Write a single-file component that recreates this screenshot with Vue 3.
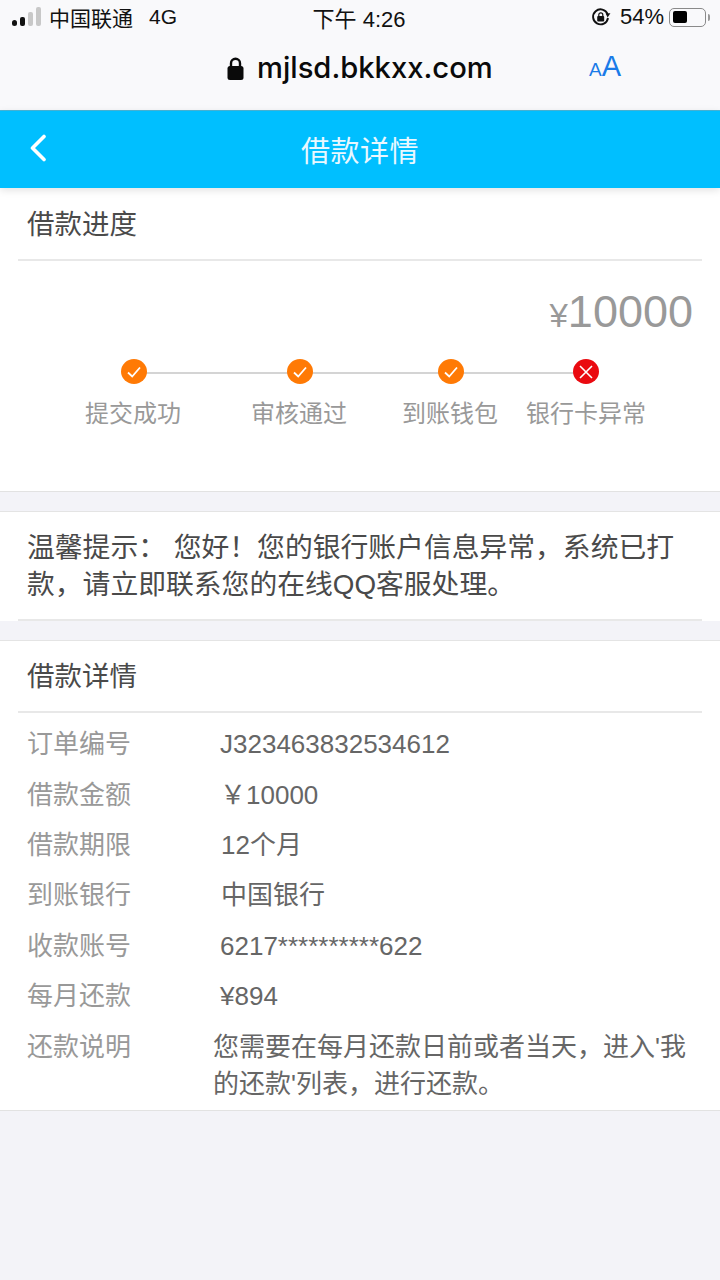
<script setup>
const steps = [
  { label: '提交成功', fail: false },
  { label: '审核通过', fail: false },
  { label: '到账钱包', fail: false },
  { label: '银行卡异常', fail: true }
]
const rows = [
  { k: '订单编号', v: 'J323463832534612', o: 'p0' },
  { k: '借款金额', v: '￥10000', o: 'p0' },
  { k: '借款期限', v: '12个月', o: 'p1' },
  { k: '到账银行', v: '中国银行', o: 'p1' },
  { k: '收款账号', v: '6217**********622', o: 'p0' },
  { k: '每月还款', v: '¥894', o: 'p0' }
]
</script>

<template>
  <div class="page">
    <div class="browser">
      <div class="status">
        <div class="st-left">
          <svg class="signal" width="30" height="20" viewBox="0 0 30 20">
            <rect x="0" y="13" width="5" height="6" rx="2.5" fill="#111" />
            <rect x="8" y="10" width="5" height="9" rx="2" fill="#111" />
            <rect x="16" y="5" width="5" height="14" rx="2" fill="#c8c8c8" />
            <rect x="24" y="0" width="5" height="19" rx="2" fill="#c8c8c8" />
          </svg>
          <span class="carrier">中国联通</span>
          <span class="net">4G</span>
        </div>
        <div class="st-time">下午 4:26</div>
        <div class="st-right">
          <svg width="20" height="20" viewBox="0 0 20 20" fill="none">
            <path d="M16.6 7.2A7.5 7.5 0 1 0 17 11" stroke="#111" stroke-width="1.9" />
            <path d="M19.4 6.2L14.6 6.6L16.6 10.4Z" fill="#111" />
            <rect x="6.2" y="9" width="7" height="5.4" rx="1" fill="#111" />
            <path d="M7.8 9.5V7.8a2 2 0 0 1 4 0v1.7" stroke="#111" stroke-width="1.2" />
          </svg>
          <span class="pct">54%</span>
          <div class="battery"><div class="level"></div></div>
          <div class="nub"></div>
        </div>
      </div>
      <div class="address">
        <svg class="lock" width="17" height="23" viewBox="0 0 17 23">
          <rect x="0.5" y="9" width="16" height="14" rx="2.5" fill="#0a0a0a" />
          <path d="M4 10V6.2a4.5 4.5 0 0 1 9 0V10" fill="none" stroke="#0a0a0a" stroke-width="2.4" />
        </svg>
        <span class="host">mjlsd.bkkxx.com</span>
        <span class="aa"><span class="a-s">A</span><span class="a-l">A</span></span>
      </div>
    </div>

    <header class="nav">
      <svg class="back" width="18" height="28" viewBox="0 0 18 28" fill="none">
        <path d="M15 2.5L3.5 14L15 25.5" stroke="#fff" stroke-width="3.6" stroke-linecap="round" stroke-linejoin="round" />
      </svg>
      <h1>借款详情</h1>
    </header>

    <section class="card progress">
      <div class="head">借款进度</div>
      <div class="amount"><span class="yen">¥</span>10000</div>
      <div class="steps">
        <div class="line"></div>
        <div v-for="s in steps" :key="s.label" class="step">
          <span class="dot" :class="{ fail: s.fail }">
            <svg v-if="!s.fail" width="16" height="14" viewBox="0 0 16 14" fill="none">
              <path d="M2 7.5L6.2 11.5L14 2.5" stroke="#fff" stroke-width="1.8" />
            </svg>
            <svg v-else width="16" height="16" viewBox="0 0 16 16" fill="none">
              <path d="M2 2L14 14M14 2L2 14" stroke="#fff" stroke-width="1.6" />
            </svg>
          </span>
          <span class="label">{{ s.label }}</span>
        </div>
      </div>
    </section>

    <section class="card tip">
      <p>温馨提示： 您好！您的银行账户信息异常，系统已打款，请立即联系您的在线QQ客服处理。</p>
    </section>

    <section class="card detail">
      <div class="head">借款详情</div>
      <div class="rows">
        <div v-for="r in rows" :key="r.k" class="row">
          <span class="k">{{ r.k }}</span>
          <span class="v" :class="r.o">{{ r.v }}</span>
        </div>
        <div class="row note">
          <span class="k">还款说明</span>
          <span class="v">您需要在每月还款日前或者当天，进入'我的还款'列表，进行还款。</span>
        </div>
      </div>
    </section>
  </div>
</template>

<style>
html, body { margin: 0; background: #f2f2f7; }
</style>

<style scoped>
.page {
  width: 720px;
  height: 1280px;
  overflow: hidden;
  background: #f3f3f8;
  font-family: "Liberation Sans", "Noto Sans CJK SC", sans-serif;
  color: #444;
}
.browser { height: 110px; background: #f9f9fb; border-bottom: 1px solid #4ab6d8; }
.status {
  height: 36px;
  display: grid;
  grid-template-columns: 1fr auto 1fr;
  column-gap: 0;
  align-items: center;
  padding: 0 10px 2px 12px;
  box-sizing: border-box;
  font-size: 21px;
  color: #111;
}
.st-left { display: flex; align-items: center; }
.signal { margin-right: 7px; }
.carrier { font-size: 21px; }
.net { margin-left: 16px; }
.st-time { font-size: 22px; margin-left: -4px; }
.st-right { display: flex; align-items: center; justify-content: flex-end; }
.pct { margin: 0 5px 0 9px; font-size: 22px; }
.battery {
  width: 29px;
  height: 12px;
  border: 1.5px solid #8a8a8a;
  border-radius: 5px;
  padding: 2.5px 3px;
  box-sizing: content-box;
}
.level { width: 14px; height: 100%; background: #000; border-radius: 2px; }
.nub { width: 2px; height: 7px; margin-left: 2px; background: #999; border-radius: 0 2px 2px 0; }
.address { position: relative; height: 74px; display: flex; align-items: center; padding-left: 227px; box-sizing: border-box; padding-bottom: 11px; }
.lock { margin-right: 13px; margin-top: 1px; }
.host { font-family: Inter, "Liberation Sans", sans-serif; font-size: 29.2px; font-weight: 500; color: #0a0a0a; white-space: nowrap; }
.aa { position: absolute; left: 589px; top: 16px; color: #1a7be8; line-height: 1; display: flex; align-items: baseline; }
.a-s { font-size: 19px; margin-right: 0; }
.a-l { font-size: 29px; }

.nav {
  position: relative;
  z-index: 1;
  height: 77px;
  padding-bottom: 2px;
  box-sizing: border-box;
  background: #00bfff;
  box-shadow: 0 2px 8px rgba(0, 0, 0, .12);
  display: flex;
  align-items: center;
  justify-content: center;
}
.nav h1 { margin: 0; font-size: 29px; font-weight: 400; color: #e9f8ff; letter-spacing: 0.5px; }
.back { position: absolute; left: 29px; top: 23px; }

.card { background: #fff; border-bottom: 1px solid #e2e2e2; box-sizing: border-box; }
.head {
  margin: 0 18px;
  padding-left: 9px;
  border-bottom: 2px solid #e8e8e8;
  font-size: 27.5px;
  color: #4a4a4a;
}
.progress { height: 304px; }
.progress .head { height: 73px; line-height: 73px; box-sizing: border-box; }
.amount {
  height: 74px;
  padding-right: 27px;
  text-align: right;
  font-size: 45px;
  line-height: 102px;
  color: #999;
}
.yen { font-size: 33px; }
.steps {
  position: relative;
  margin-top: 24px;
  padding-left: 50px;
  display: grid;
  grid-template-columns: 166px 166px 136px 136px;
}
.line { position: absolute; left: 133px; width: 453px; top: 13px; height: 2px; background: #d4d4d4; }
.step { position: relative; display: flex; flex-direction: column; align-items: center; }
.dot {
  width: 26px;
  height: 25px;
  margin-left: 1px;
  border-radius: 50%;
  background: #ff7a05;
  display: flex;
  align-items: center;
  justify-content: center;
}
.dot.fail { background: #ea0a10; margin-left: 0; }
.label { margin-top: 14px; font-size: 24px; color: #999; white-space: nowrap; line-height: 32px; }

.tip { margin-top: 19px; height: 110px; border-top: 1px solid #e4e4e4; border-bottom: 0; }
.tip p {
  margin: 0 18px;
  padding: 17px 9px 0;
  height: 109px;
  box-sizing: border-box;
  border-bottom: 2px solid #e8e8e8;
  font-size: 27.8px;
  line-height: 37px;
  color: #4a4a4a;
}
.detail { margin-top: 19px; height: 471px; border-top: 1px solid #e4e4e4; }
.detail .head { height: 72px; line-height: 72px; box-sizing: border-box; }
.rows { padding: 6px 27px 0; }
.row { display: flex; height: 50.4px; align-items: center; font-size: 26px; line-height: 36px; }
.k { width: 193px; flex: none; color: #999; }
.v { color: #666; }
.p0 { padding-left: 0; }
.p1 { padding-left: 1px; }
.note { align-items: flex-start; height: auto; margin-top: 8px; }
.note .k { width: 186px; line-height: 37px; }
.note .v { line-height: 37px; color: #666; width: 476px; }
</style>
